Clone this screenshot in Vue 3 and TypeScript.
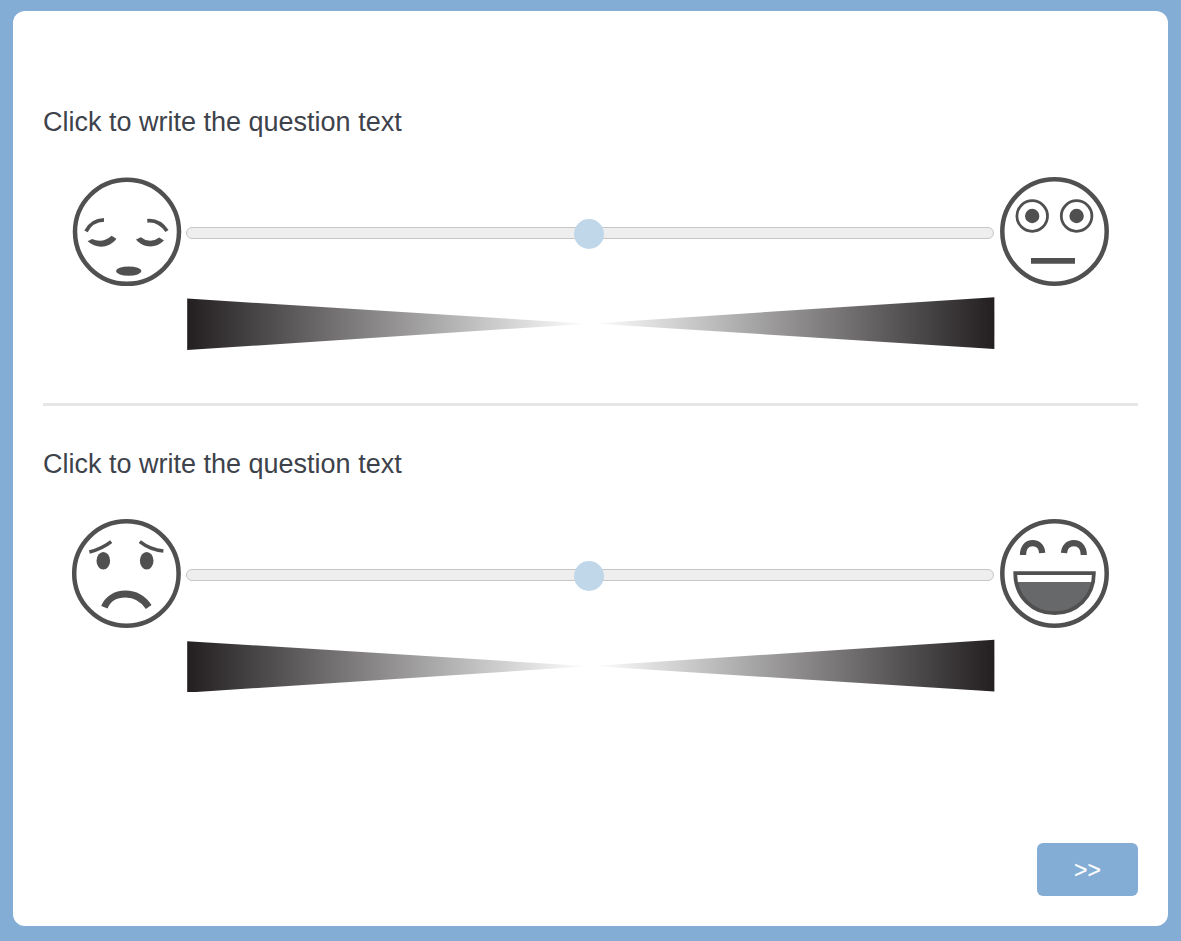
<script setup lang="ts">
interface Question {
  id: string
  text: string
  left: string
  right: string
  wedgeTop: number
}

const questions: Question[] = [
  { id: 'q1', text: 'Click to write the question text', left: 'sad', right: 'stare', wedgeTop: 0 },
  { id: 'q2', text: 'Click to write the question text', left: 'frown', right: 'laugh', wedgeTop: 0.6 },
]
</script>

<template>
  <div class="page">
    <main class="card">
      <section v-for="q in questions" :key="q.id" class="question">
        <h2 class="title">{{ q.text }}</h2>
        <div class="scale">
          <svg v-if="q.left === 'sad'" class="face" viewBox="0 0 110 110">
            <circle cx="55" cy="54.8" r="52" stroke-width="4.5" />
            <path d="M14 54.3Q19.5 43.2 32 42.8" stroke-width="3.8" />
            <path d="M75.3 43.8Q87 42.5 95 54" stroke-width="3.8" />
            <path class="solid" d="M15.6 64.3L20 62Q30.5 66.8 39.6 58.8L44.4 61.8C37 71.8 24 72 15.6 64.3Z" />
            <path class="solid" d="M64 62.5L68.8 60.2Q78 67.3 87.2 60.4L92 63.5C84.5 71.4 71.5 71.6 64 62.5Z" />
            <ellipse class="solid" cx="56.7" cy="94.1" rx="12.6" ry="4.7" />
          </svg>
          <svg v-else class="face" viewBox="0 0 110 110">
            <circle cx="54.4" cy="54.5" r="52.2" stroke-width="4.5" />
            <path d="M17.4 33Q30 29.8 39.2 22.6" stroke-width="3.5" />
            <path d="M67.8 22.6Q78 30.6 91.4 32" stroke-width="3.5" />
            <ellipse class="solid" cx="31.3" cy="41.7" rx="6.8" ry="8.8" />
            <ellipse class="solid" cx="74.7" cy="41.7" rx="6.8" ry="8.8" />
            <path d="M32.4 88.2C35.5 80 43.5 75 53.5 75S71 79.5 76.7 88" stroke-width="6.8" />
          </svg>

          <div class="slider">
            <div class="track"><span class="handle"></span></div>
          </div>

          <svg v-if="q.right === 'stare'" class="face" viewBox="0 0 110 110">
            <circle cx="54.5" cy="54.5" r="52.2" stroke-width="4.5" />
            <circle cx="32.2" cy="39" r="15.3" stroke-width="2.8" />
            <circle cx="76.6" cy="39" r="15.3" stroke-width="2.8" />
            <circle class="solid" cx="32.2" cy="39" r="7.2" />
            <circle class="solid" cx="76.6" cy="39" r="7.2" />
            <path d="M31 83.9H75" stroke-width="5.6" />
          </svg>
          <svg v-else class="face" viewBox="0 0 110 110">
            <circle cx="54.5" cy="54.5" r="52.2" stroke-width="4.5" />
            <path d="M23 36C23 28.5 27 24.2 32.7 24.2S41.8 28 42.2 34" stroke-width="6.2" />
            <path d="M64 34C64.5 28 68 24.2 73.8 24.2S83.8 28.5 83.8 36" stroke-width="6.2" />
            <path class="tongue" d="M16.3 63H92.8C90 82 74.5 94.2 54.5 94.2S19 82 16.3 63Z" />
            <path d="M15.2 54.1H93.9C93.9 78 76.2 94.2 54.5 94.2S15.2 78 15.2 54.1Z" stroke-width="3.7" />
          </svg>
        </div>
        <svg class="wedges" viewBox="0 0 809 54">
          <defs>
            <linearGradient :id="q.id + '-fade'" x1="0" x2="1" y1="0" y2="0">
              <stop offset="0" stop-color="#231f20" />
              <stop offset="0.14" stop-color="#413e3f" />
              <stop offset="0.5" stop-color="#908e8f" />
              <stop offset="0.75" stop-color="#c8c8c8" />
              <stop offset="1" stop-color="#ffffff" />
            </linearGradient>
            <linearGradient :id="q.id + '-rise'" x1="1" x2="0" y1="0" y2="0">
              <stop offset="0" stop-color="#231f20" />
              <stop offset="0.14" stop-color="#413e3f" />
              <stop offset="0.5" stop-color="#908e8f" />
              <stop offset="0.75" stop-color="#c8c8c8" />
              <stop offset="1" stop-color="#ffffff" />
            </linearGradient>
          </defs>
          <g :transform="`translate(0 ${q.wedgeTop})`">
            <path d="M1.2 2.6L403 27.7L1.2 54Z" :fill="`url(#${q.id}-fade)`" />
            <path d="M808.4 1.2V53L406 27.4Z" :fill="`url(#${q.id}-rise)`" />
          </g>
        </svg>
      </section>
      <footer class="footer">
        <button class="next" type="button">&gt;&gt;</button>
      </footer>
    </main>
  </div>
</template>

<style>
body {
  margin: 0;
  background: #83add4;
}
</style>

<style scoped>
.page {
  box-sizing: border-box;
  height: 941px;
  padding: 11px 13px 15px;
  background: #83add4;
  font-family: "Liberation Sans", Arial, sans-serif;
}
.card {
  box-sizing: border-box;
  height: 915px;
  padding: 50px 30px 30px;
  border-radius: 12px;
  background: #fff;
  display: flex;
  flex-direction: column;
}
.question {
  box-sizing: border-box;
  height: 342px;
  padding-top: 41px;
}
.question + .question {
  border-top: 3px solid #e5e6e8;
  padding-top: 38px;
}
.title {
  margin: 0;
  height: 39px;
  line-height: 40px;
  font-size: 27px;
  font-weight: 400;
  color: #3d424b;
}
.scale {
  display: grid;
  grid-template-columns: 110px 808px 110px;
  column-gap: 4px;
  margin: 36px 28px 0 29px;
  height: 110px;
}
.scale > .face:last-child {
  margin-left: 2px;
}
.face {
  display: block;
  width: 110px;
  height: 110px;
  overflow: visible;
  fill: none;
  stroke: #505051;
}
.face .solid {
  fill: #505051;
  stroke: none;
}
.face .tongue {
  fill: #67686a;
  stroke: none;
}
.slider {
  padding-top: 50px;
}
.track {
  position: relative;
  box-sizing: border-box;
  height: 12px;
  border: 1px solid #c6c6c6;
  border-radius: 6px;
  background: #eeeeee;
}
.handle {
  position: absolute;
  left: 387px;
  top: -9px;
  width: 30px;
  height: 30px;
  border-radius: 50%;
  background: #c0d6e9;
}
.wedges {
  display: block;
  width: 809px;
  height: 54px;
  margin: 9px 0 0 143px;
}
.footer {
  display: flex;
  justify-content: flex-end;
  margin-top: auto;
}
.next {
  width: 101px;
  height: 53px;
  padding: 1px 0 0;
  border: 0;
  border-radius: 6px;
  background: #83add4;
  color: #fff;
  font-family: inherit;
  font-size: 23px;
  -webkit-text-stroke: 0.2px #fff;
}
</style>
